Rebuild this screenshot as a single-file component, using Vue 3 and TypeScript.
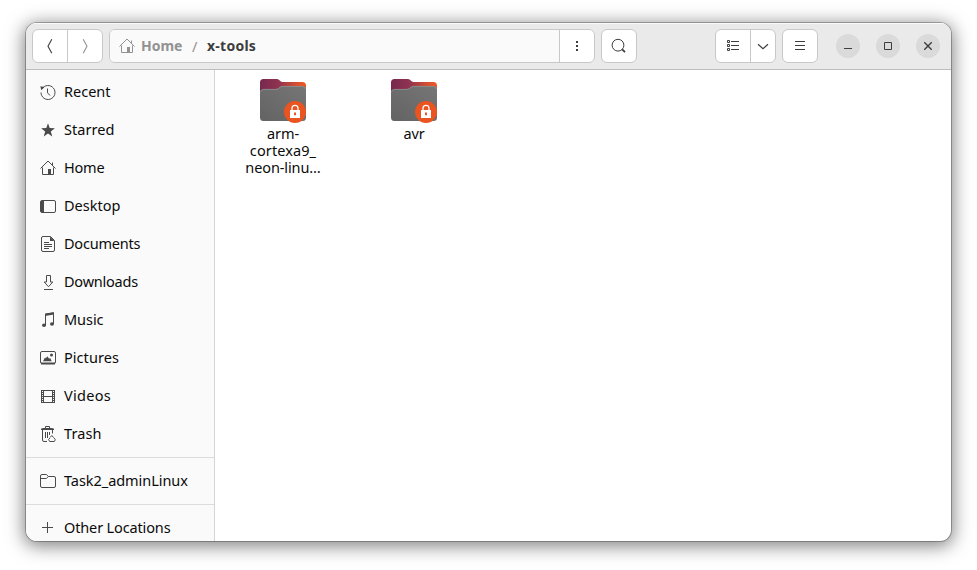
<script setup lang="ts">
interface Place {
  id: string
  label: string
  spacing: number
}

interface Folder {
  name: string
  lines: { text: string; spacing: number }[]
}

const places: Place[] = [
  { id: 'recent', label: 'Recent', spacing: 0 },
  { id: 'starred', label: 'Starred', spacing: 0.05 },
  { id: 'home', label: 'Home', spacing: -0.2 },
  { id: 'desktop', label: 'Desktop', spacing: 0 },
  { id: 'documents', label: 'Documents', spacing: -0.22 },
  { id: 'downloads', label: 'Downloads', spacing: -0.22 },
  { id: 'music', label: 'Music', spacing: -0.05 },
  { id: 'pictures', label: 'Pictures', spacing: 0.05 },
  { id: 'videos', label: 'Videos', spacing: 0.3 },
  { id: 'trash', label: 'Trash', spacing: 0.1 },
]
const bookmarks: Place[] = [{ id: 'folder', label: 'Task2_adminLinux', spacing: -0.05 }]
const others: Place[] = [{ id: 'plus', label: 'Other Locations', spacing: -0.14 }]
const groups: Place[][] = [places, bookmarks, others]

const folders: Folder[] = [
  {
    name: 'arm',
    lines: [
      { text: 'arm-', spacing: -0.1 },
      { text: 'cortexa9_', spacing: 0.1 },
      { text: 'neon-linu…', spacing: -0.1 },
    ],
  },
  { name: 'avr', lines: [{ text: 'avr', spacing: -0.2 }] },
]
</script>

<template>
  <div class="desktop">
    <div class="window">
      <header class="bar">
        <div class="group">
          <button class="btn w34">
            <svg class="ico" viewBox="0 0 16 16"><path d="M9.800 1.200 6 8.200l3.800 7" fill="none" stroke="#3d3d3d" stroke-width="1.100" /></svg>
          </button>
          <button class="btn w34 split">
            <svg class="ico" viewBox="0 0 16 16"><path d="M6.200 1.200 10 8.200l-3.800 7" fill="none" stroke="#929292" stroke-width="1.100" /></svg>
          </button>
        </div>
        <div class="group path">
          <div class="crumbs">
            <svg class="ico dim" viewBox="0 0 16 16">
              <path d="M.5 8.500 8 1l7.500 7.500M12.500 2.500v3M2.500 7.500v7h11v-7" fill="none" stroke="currentColor" />
              <path d="M8 9h3v5.500H8z" fill="currentColor" />
            </svg>
            <span class="crumb parent">Home</span>
            <span class="slash">/</span>
            <span class="crumb current">x-tools</span>
          </div>
          <button class="btn w34 split">
            <svg class="ico" viewBox="0 0 16 16"><path d="M7 3h2v2H7zM7 7h2v2H7zM7 11h2v2H7z" fill="#3d3d3d" /></svg>
          </button>
        </div>
        <div class="group">
          <button class="btn w34">
            <svg class="ico" viewBox="0 0 16 16">
              <circle cx="7" cy="7.200" r="5.900" fill="none" stroke="#3d3d3d" />
              <path d="m11.200 11.300 2.800 2.800" stroke="#3d3d3d" stroke-width="1.800" />
            </svg>
          </button>
        </div>
        <div class="gap"></div>
        <div class="group">
          <button class="btn w34">
            <svg class="ico" viewBox="0 0 16 16">
              <path d="M2.500 2.500h2v2h-2zM2.500 6.500h2v2h-2zM2.500 10.500h2v2h-2zM6 3.500h8M6 7.500h8M6 11.500h8" fill="none" stroke="#3d3d3d" />
            </svg>
          </button>
          <button class="btn w24 split">
            <svg class="ico" viewBox="0 0 16 16"><path d="m3 6.300 5 4.400 5-4.400" fill="none" stroke="#3d3d3d" stroke-width="1.200" /></svg>
          </button>
        </div>
        <div class="group">
          <button class="btn w34">
            <svg class="ico" viewBox="0 0 16 16"><path d="M3 3.500h10M3 7.500h10M3 11.500h10" stroke="#3d3d3d" /></svg>
          </button>
        </div>
        <div class="controls">
          <button class="round">
            <svg class="ico" viewBox="0 0 16 16"><path d="M4 10.500h8" stroke="#3d3d3d" /></svg>
          </button>
          <button class="round">
            <svg class="ico" viewBox="0 0 16 16"><path d="M4.500 4.500h7v7h-7z" fill="none" stroke="#3d3d3d" /></svg>
          </button>
          <button class="round">
            <svg class="ico" viewBox="0 0 16 16"><path d="m4.300 4.300 7.400 7.400M11.700 4.300l-7.400 7.400" stroke="#3d3d3d" stroke-width="1.400" /></svg>
          </button>
        </div>
      </header>
      <div class="body">
        <nav class="side">
          <ul v-for="(group, g) in groups" :key="g" class="section">
            <li v-for="p in group" :key="p.id" class="place">
              <svg class="ico" viewBox="0 0 16 16" fill="none" stroke="currentColor">
                <template v-if="p.id === 'recent'">
                  <path d="M2 4.900A7 7 0 1 1 1 8.500" />
                  <path d="M7.500 4.500v4.300l2.500 2.700" />
                  <path d="M.3 2.300 4.500 3 1.300 6.300z" fill="currentColor" stroke="none" />
                </template>
                <path v-else-if="p.id === 'starred'" d="m8 1.200 1.700 4.900 5.200.1-4.100 3.200 1.500 5L8 11.500l-4.300 2.900 1.500-5L1.100 6.200l5.200-.1z" fill="currentColor" stroke="none" />
                <template v-else-if="p.id === 'home'">
                  <path d="M.5 8.500 8 1l7.500 7.500M12.500 2.500v3M2.500 7.500v7h11v-7" />
                  <path d="M8 9h3v5.500H8z" fill="currentColor" stroke="none" />
                </template>
                <template v-else-if="p.id === 'desktop'">
                  <rect x=".5" y="2.500" width="15" height="12" rx="1.500" />
                  <path d="M1 3h3v11H1z" fill="currentColor" stroke="none" />
                </template>
                <template v-else-if="p.id === 'documents'">
                  <path d="M3 .5h7.500l4 4V14A1.500 1.500 0 0 1 13 15.500H3A1.500 1.500 0 0 1 1.500 14V2A1.500 1.500 0 0 1 3 .5z" />
                  <path d="M10 .5V5h4.500z" fill="currentColor" stroke="none" />
                  <path d="M4 6.500h5M4 8.500h8M4 10.500h8M4 12.500h5" />
                </template>
                <path v-else-if="p.id === 'downloads'" d="M6.500 1.500h4v6.500h2.300L8.500 12.700 4.200 8h2.300zM4 15.500h9" />
                <template v-else-if="p.id === 'music'">
                  <path d="M5.500 13V2l8-1.200v11" />
                  <path d="M5 1.700 14 .3v2.200L5 3.900z" fill="currentColor" stroke="none" />
                  <ellipse cx="4" cy="13.200" rx="2" ry="1.700" fill="currentColor" stroke="none" />
                  <ellipse cx="12" cy="12" rx="2" ry="1.700" fill="currentColor" stroke="none" />
                </template>
                <template v-else-if="p.id === 'pictures'">
                  <rect x=".5" y="1.500" width="15" height="12" rx="1.500" />
                  <path d="M1 13.500h14" stroke-width="2" />
                  <path d="M3 11.200 5 7.500l1 .8 1.200-2.100 2 2.600 1-.8 1.500 3.200z" fill="currentColor" stroke="none" />
                  <circle cx="11.500" cy="4.900" r="1.500" fill="currentColor" stroke="none" />
                </template>
                <template v-else-if="p.id === 'videos'">
                  <path d="M3.500 2v13M12.500 2v13M3.500 2.500h9M3.500 8.500h9M3.500 14.500h9" />
                  <path d="M1.500 2v13M14.500 2v13" />
                  <path d="M2.500 2v13M13.500 2v13" stroke-dasharray="1 1" />
                </template>
                <template v-else-if="p.id === 'trash'">
                  <path d="M5.500 2.500v-2h4v2" />
                  <path d="M1 4V2.700L3 2h9l2 .7V4z" fill="currentColor" stroke="none" />
                  <path d="M2.500 4v10a1.500 1.500 0 0 0 1.500 1.500h3M12.500 4v3.500M5.500 6v6M7.500 6v6M9.500 6v3" />
                  <path d="M10 11.500 11.800 9.500 13.500 11.500M10 12l-1.500 1.500 1.200 2h4.600l1-1.800-1.500-2" />
                </template>
                <template v-else-if="p.id === 'folder'">
                  <path d="M.5 13V3A1.500 1.500 0 0 1 2 1.500h4.500L8.300 3.500H14A1.500 1.500 0 0 1 15.500 5v8a1.500 1.500 0 0 1-1.500 1.500H2A1.500 1.500 0 0 1 .5 13zM.5 5.500h5.800l2-2" />
                </template>
                <path v-else d="M7.500 2v11M2 7.500h11" />
              </svg>
              <span class="label" :style="{ letterSpacing: p.spacing + 'px' }">{{ p.label }}</span>
            </li>
          </ul>
        </nav>
        <main class="files">
          <div v-for="f in folders" :key="f.name" class="file">
            <svg class="folder" viewBox="0 0 48 48">
              <defs>
                <linearGradient :id="'tab-' + f.name" x1="0" x2="1" y1="0" y2="0">
                  <stop offset="0" stop-color="#77284f" />
                  <stop offset=".4" stop-color="#8f3350" />
                  <stop offset=".85" stop-color="#e2522c" />
                  <stop offset="1" stop-color="#ec5a26" />
                </linearGradient>
                <linearGradient :id="'front-' + f.name" x1="0" x2="1" y1="1" y2="0">
                  <stop offset="0" stop-color="#636363" />
                  <stop offset="1" stop-color="#767676" />
                </linearGradient>
              </defs>
              <path d="M1 20V6.500A3.500 3.500 0 0 1 4.500 3H18c2.500 0 3 3 5.500 3h20A3.500 3.500 0 0 1 47 9.500V20z" :fill="`url(#tab-${f.name})`" />
              <path d="M1 41.500V16.500A3.500 3.500 0 0 1 4.500 13H17c3 0 3.500-3 6.500-3h20a3.500 3.500 0 0 1 3.500 3.500v28a3.500 3.500 0 0 1-3.500 3.500h-39A3.500 3.500 0 0 1 1 41.500z" :fill="`url(#front-${f.name})`" />
              <path d="M1.400 16a3.500 3.500 0 0 1 3.100-2.600H17c3 0 3.500-3 6.500-3h20a3.500 3.500 0 0 1 3.100 2.600" fill="none" stroke="#929292" stroke-width=".8" />
              <circle cx="36" cy="36" r="11" fill="#e95420" />
              <path d="M33 34.500V32.300a3 3 0 0 1 6 0v2.200" fill="none" stroke="#fff" stroke-width="1.300" />
              <path d="M31 34h10v8H31zm4 2.500v2.800h2v-2.800z" fill="#fff" fill-rule="evenodd" />
            </svg>
            <div v-for="l in f.lines" :key="l.text" class="line" :style="{ letterSpacing: l.spacing + 'px' }">{{ l.text }}</div>
          </div>
        </main>
      </div>
    </div>
  </div>
</template>

<style>
body {
  margin: 0;
  background: #fff;
}
</style>

<style scoped>
.desktop {
  box-sizing: border-box;
  width: 977px;
  height: 570px;
  padding: 23px 26px 29px 26px;
  overflow: hidden;
  background: #fff;
  font-family: 'Noto Sans', 'Open Sans', sans-serif;
  font-size: 14.5px;
  color: #0b0b0b;
}
.window {
  display: flex;
  flex-direction: column;
  width: 925px;
  height: 518px;
  border-radius: 11px;
  overflow: hidden;
  background: #fff;
  box-shadow: 0 0 0 1px rgba(0, 0, 0, 0.26), 0 3px 18px 2px rgba(0, 0, 0, 0.5);
}
.bar {
  box-sizing: border-box;
  display: flex;
  flex: none;
  height: 47px;
  padding: 6px 11px 0 6px;
  border-bottom: 1px solid #bdbdbd;
  background: #eaeaea;
  box-shadow: inset 0 1px #fafafa;
}
.group {
  box-sizing: border-box;
  display: flex;
  height: 34px;
  margin-right: 6px;
  border: 1px solid #c8c8c8;
  border-radius: 6px;
  background: #fff;
  overflow: hidden;
}
.btn,
.round {
  box-sizing: border-box;
  display: flex;
  align-items: center;
  justify-content: center;
  padding: 0;
  border: 0;
  background: none;
}
.w34 { width: 34px; }
.w24 { width: 24px; }
.split {
  box-sizing: content-box;
  border-left: 1px solid #c8c8c8;
}
.ico {
  display: block;
  flex: none;
  width: 16px;
  height: 16px;
}
.path {
  width: 486px;
}
.crumbs {
  display: flex;
  flex: 1;
  align-items: center;
  padding-left: 9px;
  background: #fafafa;
}
.dim {
  color: #929292;
}
.crumb {
  font-weight: 700;
  font-size: 14px;
  line-height: 32px;
}
.parent {
  width: 42px;
  margin-left: 6px;
  color: #929292;
}
.slash {
  width: 15px;
  padding-left: 9px;
  color: #929292;
}
.current {
  color: #3d3d3d;
  letter-spacing: 0.25px;
}
.gap {
  flex: 1;
}
.controls {
  display: flex;
  gap: 16px;
  padding: 5px 0 0 12px;
}
.round {
  width: 24px;
  height: 24px;
  border-radius: 50%;
  background: #dadada;
}
.body {
  display: flex;
  flex: 1;
  min-height: 0;
}
.side {
  box-sizing: border-box;
  width: 189px;
  padding-top: 3px;
  border-right: 1px solid #d5d5d5;
  background: #fafafa;
  overflow: hidden;
}
.section {
  margin: 0;
  padding: 0;
  list-style: none;
}
.section + .section {
  margin-top: 4px;
  padding-top: 4px;
  border-top: 1px solid #dcdcdc;
}
.place {
  display: flex;
  align-items: center;
  height: 38px;
  padding-left: 14px;
  gap: 8px;
  color: #4a4a4a;
}
.label {
  padding-bottom: 2px;
  color: #0b0b0b;
  line-height: 20px;
  white-space: nowrap;
}
.files {
  display: flex;
  flex: 1;
  gap: 31px;
  padding: 6px 0 0 18px;
}
.file {
  display: flex;
  flex-direction: column;
  align-items: center;
  width: 100px;
}
.folder {
  width: 48px;
  height: 48px;
  margin-bottom: 1px;
}
.line {
  height: 17px;
  line-height: 17px;
  white-space: nowrap;
}
</style>
